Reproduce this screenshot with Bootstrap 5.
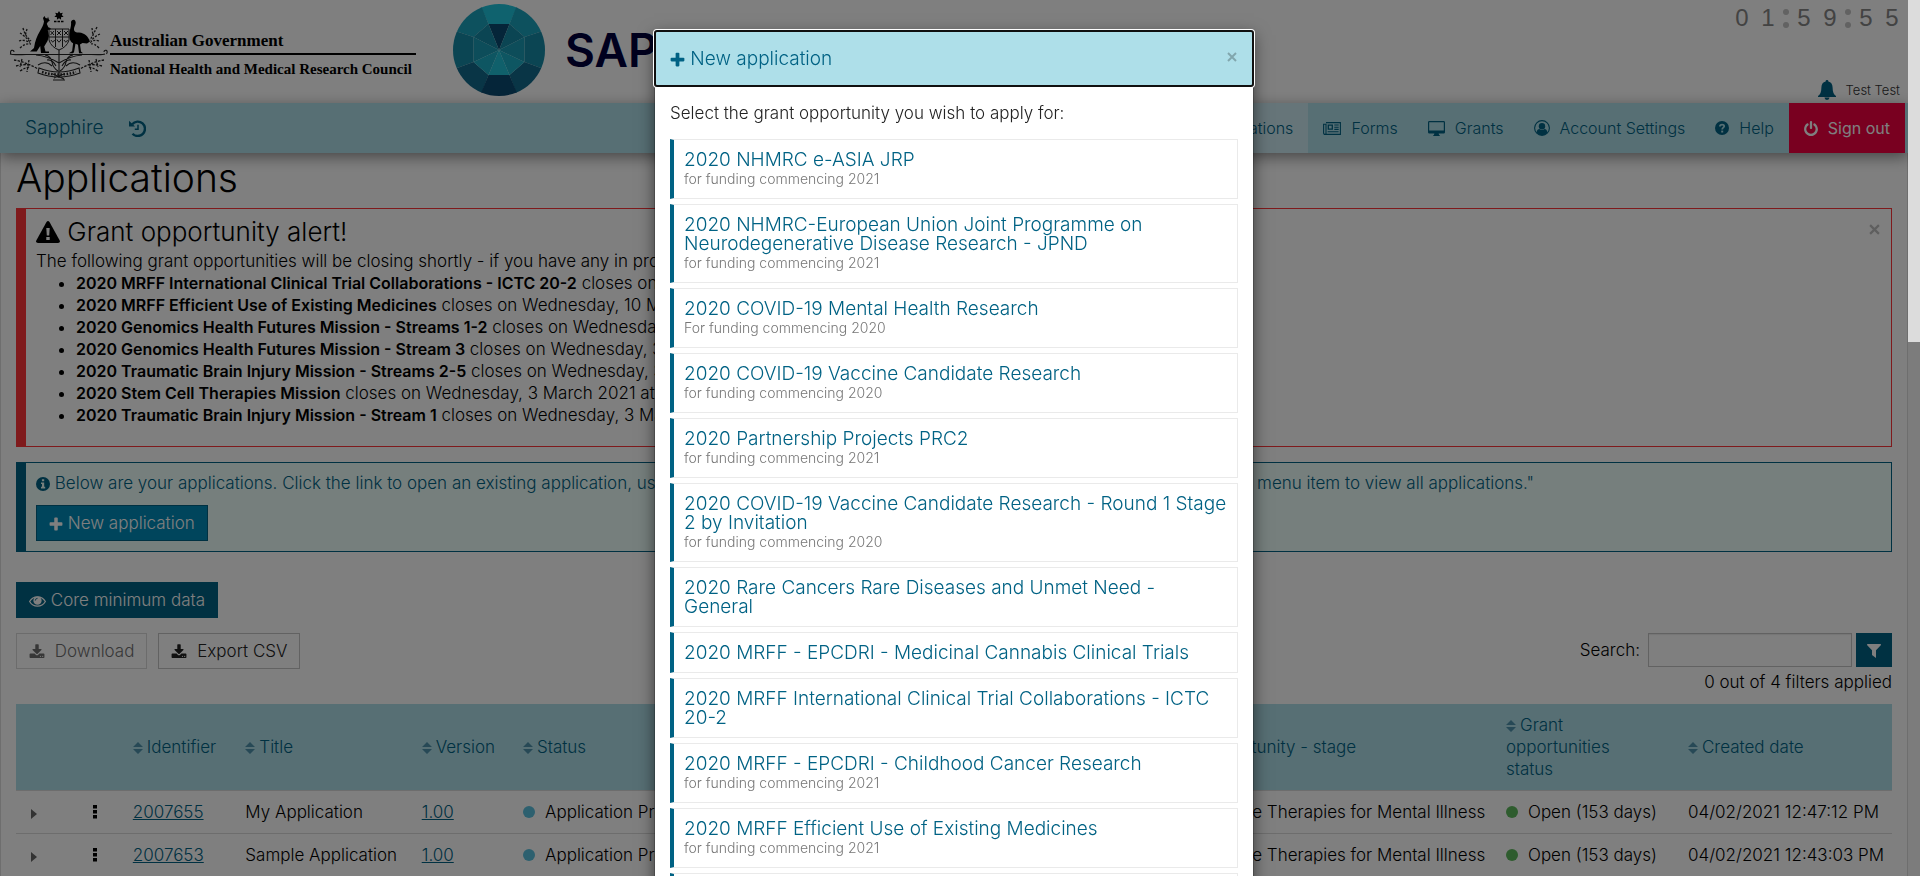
<!DOCTYPE html>
<html lang="en">
<head>
<meta charset="utf-8">
<meta name="viewport" content="width=device-width, initial-scale=1">
<title>Sapphire - Applications</title>
<link href="https://cdn.jsdelivr.net/npm/bootstrap@5.3.0/dist/css/bootstrap.min.css" rel="stylesheet">
<style>
:root { --brand: #006284; --sky: #aedfe8; }
body { font-family: Inter, "Liberation Sans", sans-serif; font-size: 17px; font-weight: 300; line-height: 22px; color: #000; background: #fff; }
a { color: var(--brand); }
.fa-svg { fill: currentColor; flex: none; vertical-align: -2px; }
.page-wrap { margin-right: 12px; }

/* masthead */
.masthead { height: 103px; }
.crest { margin: 10px 0 0 8px; }
.gov-name { font: bold 17px/20px "Liberation Serif", serif; width: 306px; margin: 31px 0 0 2px; }
.gov-name hr { margin: 2px 0 4px; border-top: 2px solid #000; opacity: 1; }
.gov-name .council { font-size: 15px; white-space: nowrap; }
.gem { margin: 4px 0 0 37px; }
.wordmark { font-size: 46px; line-height: 56px; font-weight: 600; color: #00003c; margin: 22px 0 0 20px; }
.countdown { font: 24px/24px "Liberation Sans", sans-serif; color: #868686; padding: 6px 3px 0 0; }
.countdown .digit { width: 26px; text-align: center; }
.countdown .sep { width: 10px; height: 22px; padding: 3px 2px 0; display: flex; flex-direction: column; justify-content: space-between; }
.countdown .sep i { width: 6px; height: 6px; border-radius: 50%; background: #c4c4c4; }
.user-line { font-size: 13px; line-height: 20px; color: #333; gap: 10px; padding: 0 8px 3px 0; }

/* navigation */
.topnav { background: var(--sky); height: 50px; padding: 0 3px 0 25px; position: relative; box-shadow: 0 4px 14px rgba(0,0,0,.45); }
.topnav .navbar-brand { font-size: 19px; color: var(--brand); padding: 0; margin: 0 26px 0 0; }
.topnav .nav-link { font-size: 16px; color: var(--brand); padding: 0 15px; height: 50px; display: flex; align-items: center; gap: 10px; border-radius: 0; }
.topnav .nav-link.active { background: #ccebf3; }
.topnav .sign-out { background: #f20041; color: #fff; font-weight: 400; }

/* page body */
.content-box { border: solid #dcdcdc; border-width: 0 1px; padding: 3px 15px; min-height: 723px; }
.content-box h1 { font-size: 39px; line-height: 44px; font-weight: 300; margin-bottom: 8px; }
.notice { border: 1px solid; border-left-width: 10px; padding: 9px 10px 10px; }
.notice-danger { border-color: #ff3438; padding-bottom: 20px; position: relative; }
.notice-danger h4 { font-size: 26px; line-height: 28px; font-weight: 300; margin-bottom: 4px; }
.notice-danger ul { padding-left: 40px; margin: 0; }
.notice-danger strong { font-size: 16px; font-weight: 600; }
.notice-info { border-color: var(--brand); background: #ecfffa; color: var(--brand); margin-top: 15px; }
.x-btn { border: 0; background: none; padding: 0; color: #000; opacity: .25; line-height: 0; }
.notice .x-btn { position: absolute; right: 11px; top: 15px; }
.btn { --bs-btn-border-radius: 0; --bs-btn-font-size: 17px; --bs-btn-font-weight: 300; --bs-btn-line-height: 22px; --bs-btn-padding-x: 12px; --bs-btn-padding-y: 6px; display: block; }
.btn-new { --bs-btn-bg: #008bb8; --bs-btn-color: #fff; --bs-btn-border-color: var(--brand); margin-top: 11px; }
.btn-brand { --bs-btn-bg: var(--brand); --bs-btn-color: #fff; --bs-btn-border-color: var(--brand); }
.btn-core { margin-top: 30px; }
.btn-plain { --bs-btn-bg: #fff; --bs-btn-color: #222; --bs-btn-border-color: #c4c4c4; --bs-btn-disabled-color: #222; --bs-btn-disabled-border-color: #c4c4c4; }
.btn-plain .fa-svg { margin-right: 5px; }
.toolbar { margin-top: 15px; }
.toolbar-buttons { gap: 11px; }
.search-box { width: 204px; height: 34px; border: 1px solid #c4c4c4; border-radius: 0; box-shadow: inset 0 1px 1px rgba(0,0,0,.08); }
.btn-filter { width: 36px; height: 34px; padding: 0; }

/* applications table */
.app-table { table-layout: fixed; margin: 11px 0 0; font-size: 17px; font-weight: 300; --bs-table-color: #000; --bs-table-bg: transparent; --bs-table-border-color: #dadada; }
.app-table td { white-space: nowrap; }
.app-table > :not(caption) > * > * { padding: 10px 8px; }
.app-table thead th { background: var(--sky); color: var(--brand); font-weight: 300; vertical-align: middle; }
.sort { fill: #4f93ac; margin-right: 4px; }
.dot { display: inline-block; width: 12px; height: 12px; border-radius: 50%; margin-right: 10px; background: #5bc0de; }
.dot-open { background: #5cb85c; }
.fold { border: 0; background: none; padding: 0 0 0 7px; color: #666; line-height: 1; display: block; }
.kebab { border: 0; background: none; padding: 0; color: #000; line-height: 1; display: block; }
.fold, .kebab { height: 20px; }

/* dialog */
.modal-backdrop.show { opacity: .5; }
.modal { right: 12px; width: auto; overflow: hidden; }
.modal-dialog { max-width: 600px; margin: 30px auto; }
.modal-content { border-radius: 0; border: 1px solid rgba(0,0,0,.2); box-shadow: 0 5px 15px rgba(0,0,0,.5); color: #222; }
.modal-header { background: #aedfe9; color: var(--brand); border: 0; border-radius: 2px; outline: 2px solid #101010; outline-offset: -1px; box-shadow: 0 0 0 2px #fff; padding: 17px 16px 16px 15px; }
.modal-title { font-size: 19px; line-height: 22px; font-weight: 300; }
.modal-body { padding: 16px 15px 15px; }
.modal-body p { margin-bottom: 15px; }
.grant { display: block; text-decoration: none; font-size: 19px; line-height: 19px; border: 1px solid #eaeaea; border-left: 4px solid var(--brand); padding: 10px 8px 10px 10px; margin-bottom: 5px; color: var(--brand); }
.grant .sub { display: block; font-size: 14px; color: #777; }

.scroll-rail { position: fixed; z-index: 1070; top: 0; right: 0; bottom: 0; width: 12px; background: #7c7c7c; }
.scroll-rail div { height: 39%; background: #dcdcdc; }
</style>
</head>
<body class="modal-open overflow-hidden">

<svg width="0" height="0" class="position-absolute" aria-hidden="true">
  <symbol id="i-plus" viewBox="128 64 1536 1536"><path d="M1600 736v192q0 40-28 68t-68 28h-416v416q0 40-28 68t-68 28H800q-40 0-68-28t-28-68v-416H288q-40 0-68-28t-28-68V736q0-40 28-68t68-28h416V224q0-40 28-68t68-28h192q40 0 68 28t28 68v416h416q40 0 68 28t28 68z"/></symbol>
  <symbol id="i-download" viewBox="0 0 1792 1600"><path d="M1344 1344q0-26-19-45t-45-19-45 19-19 45 19 45 45 19 45-19 19-45zm256 0q0-26-19-45t-45-19-45 19-19 45 19 45 45 19 45-19 19-45zm128-224v320q0 40-28 68t-68 28H160q-40 0-68-28t-28-68v-320q0-40 28-68t68-28h465l135 136q58 56 136 56t136-56l136-136h464q40 0 68 28t28 68zm-325-569q17 41-14 70l-448 448q-18 19-45 19t-45-19L403 621q-31-29-14-70 17-39 59-39h256V64q0-26 19-45t45-19h256q26 0 45 19t19 45v448h256q42 0 59 39z"/></symbol>
  <symbol id="i-power" viewBox="128 0 1536 1664"><path d="M1664 896q0 156-61 298t-164 245-245 164-298 61-298-61-245-164-164-245-61-298q0-182 80.500-343T430 283q43-32 95.500-25t83.500 50q32 42 24.500 94.500T583 487q-98 74-151.500 181T378 896q0 104 40.500 198.500T528 1258t163.500 109.500T890 1408t198.500-40.500T1252 1258t109.500-163.500T1402 896q0-121-53.500-228T1197 487q-42-32-49.500-84.500T1171 308q31-43 84-50t95 25q123 93 203.500 254.500T1664 896zM1024 128v640q0 52-38 90t-90 38-90-38-38-90V128q0-52 38-90t90-38 90 38 38 90z"/></symbol>
  <symbol id="i-bell" viewBox="0 0 18 20"><path d="M9 0a1.300 1.300 0 0 1 1.300 1.500C13.200 2.100 14.600 4.500 14.600 7.500c0 4.500 1.200 7 3.400 8.500v1H0v-1c2.200-1.500 3.400-4 3.400-8.500 0-3 1.400-5.400 4.300-6A1.300 1.300 0 0 1 9 0zM6.500 17.500h5a2.500 2.500 0 0 1-5 0z"/></symbol>
  <symbol id="i-history" viewBox="0 0 17 17"><path d="M3.200 4.200A7.200 7.200 0 1 1 3.500 13.700" fill="none" stroke="currentColor" stroke-width="2.400"/><path d="M0 .800 6 6.500H0z"/><path d="M9 4.800v4.400H5.800" fill="none" stroke="currentColor" stroke-width="1.500"/></symbol>
  <symbol id="i-forms" viewBox="0 0 18 13"><path d="M3 .600h14.400v11.800H2A1.400 1.400 0 0 1 .600 11V2.200H3V11a1 1 0 0 1-1 1.300" fill="none" stroke="currentColor" stroke-width="1.100"/><path d="M5.300 3.200h4v4h-4z" fill="none" stroke="currentColor" stroke-width="1.300"/><path d="M11.300 3h4.400M11.300 5.200h4.400M11.300 7.400h4.400M4.600 9.800h11" stroke="currentColor" stroke-width="1.100"/></symbol>
  <symbol id="i-desktop" viewBox="0 0 17 15"><path d="M1.400 0h14.200A1.400 1.400 0 0 1 17 1.400v9.800a1.400 1.400 0 0 1-1.400 1.400h-5l.500 1.400h.600v1H5.300v-1h.600l.500-1.400h-5A1.400 1.400 0 0 1 0 11.200V1.400A1.400 1.400 0 0 1 1.400 0zM1.200 1.200v8.200h14.600V1.200z" fill-rule="evenodd"/></symbol>
  <symbol id="i-user" viewBox="0 0 16 16"><circle cx="8" cy="8" r="7.400" fill="none" stroke="currentColor" stroke-width="1.100"/><circle cx="8" cy="6.300" r="3.200"/><path d="M2.500 12.400c.4-2.300 1.600-3.300 2.900-3.400a4 4 0 0 0 5.200 0c1.300.1 2.500 1.100 2.900 3.400a7 7 0 0 1-11 0z"/></symbol>
  <symbol id="i-help" viewBox="0 0 14 14"><circle cx="7" cy="7" r="7"/><path d="M4.900 5.500C5 2.800 9.300 3 9.200 5.300 9.100 6.700 7.200 6.700 7.200 8.400" fill="none" stroke="var(--sky)" stroke-width="1.800"/><path d="M6.200 9.600h2v1.900h-2z" fill="var(--sky)"/></symbol>
  <symbol id="i-warn" viewBox="0 0 24 22"><path d="M10.500 1Q12-1 13.500 1l10.200 18.500Q24.500 22 22 22H2Q-.5 22 .3 19.500z"/><path d="M10.300 7h3.400l-.5 7.500h-2.400zM10.300 16h3.400v3h-3.400z" fill="#fff"/></symbol>
  <symbol id="i-info" viewBox="0 0 14 14"><circle cx="7" cy="7" r="7"/><path d="M5.900 2.300h2.300v2H5.900zM5 5.500h3.200v4.300H9.200v1.600H5V9.800h1V7H5z" fill="#ecfffa"/></symbol>
  <symbol id="i-eye" viewBox="0 0 16 12"><path d="M.6 6C4 .1 12 .1 15.400 6 12 11.900 4 11.900.6 6z" fill="none" stroke="currentColor" stroke-width="1.200"/><circle cx="8" cy="5.200" r="3.900"/><path d="M5.900 5.200A2.200 2.200 0 0 1 8.100 3" fill="none" stroke="var(--brand)" stroke-width=".8"/></symbol>
  <symbol id="i-filter" viewBox="0 0 14 14"><path d="M.5 0h13q.8.500.3 1.200L9 6.200V14L5 11V6.200L.2 1.200Q-.2.500.5 0z"/></symbol>
  <symbol id="i-x" viewBox="0 0 10 10"><path d="M1 1l8 8M9 1L1 9" stroke="currentColor" stroke-width="2"/></symbol>
  <symbol id="i-sort" viewBox="0 0 10 12"><path d="M5 0l5 5H0zM5 12L0 7h10z"/></symbol>
  <symbol id="i-caret" viewBox="0 0 6 10"><path d="M0 0l6 5-6 5z"/></symbol>
  <symbol id="i-dots" viewBox="0 0 4 14"><path d="M0 0h4v3.500H0zM0 5h4v3.500H0zM0 10h4v3.500H0z"/></symbol>
</svg>

<div class="page-wrap">
  <header class="masthead d-flex align-items-start">
    <svg class="crest flex-shrink-0" width="100" height="74" viewBox="8 10 100 74" role="img" aria-label="Commonwealth coat of arms">
      <path d="M59 11l1.300 2.300 2.500-.6-1 2.300 1.800 1.700-2.600.5.100 2.600-2.100-1.600-2.100 1.600.1-2.600-2.600-.5 1.800-1.700-1-2.300 2.500.6z"/>
      <path d="M54 21.500h10" stroke="#000" stroke-width="1.600" stroke-dasharray="2.500 1"/>
      <path d="M43 18l1.500-2 1 2 2 .5.500-2 .8 2.800 1 1.400-1.800 1-1.200 2 1.500 3.500 2.500 1-.5 1.500-2.500.2 1.200 6-1.500 5-3.300 5.500 1.300 5h3.500v1.500h-8l-.8-7-3.500 5.500H30l4-3.500c1-7 3-12 6-17 2-3.500 3.500-6 4-9.500z"/>
      <path d="M71 22c.8-3 4-3 4.500-.5 1 3-1.800 5-1.500 8.500.5 2 2 2.500 5 2.500 6 .5 9 4 11 9l-3 2-4.500-.5-2.500 1.500 1 7 2 1.700h-4l-1-8.500-2.500-1-1.500 8.500-1.200 1h-4l3.300-2 1-8c-3.500-2-4.300-6-3.500-11 .5-3.500 1.500-6 1.500-8.500z"/>
      <path d="M49 29h20v11q-2 7-10 10-8-3-10-10zM55.500 29v18M62.500 29v18M49 37h20" fill="none" stroke="#222" stroke-width="1"/>
      <path d="M50.500 31l3.500 4m0-4l-3.500 4M57 31l4 4m0-4l-4 4M64 31l4 4m0-4l-4 4M51 40q2 4 3.500 0M57 39.500q2 5 4 0M64 40q2 4 3.500 0" fill="none" stroke="#222"/>
      <path d="M11 54c-2-4 3-5 3-2M10 54q3 1 16 .5h65q12 .5 14-.5M104 52c0-3 5-2 2.500 2M36 55q12 1 23 8 11-7 23-8M59 50v28M45 55q6 1 7 7t6 9M73 55q-6 1-7 7t-6 9" fill="none" stroke="#222" stroke-width="1.100"/>
      <path d="M14 60q12 2 24 9M16 66q8-2 14-1M20 71q6-4 10-4M22 59l-2 8M29 60l-2 12M104 60q-12 2-24 9M102 66q-8-2-14-1M98 71q-6-4-10-4M96 59l2 8M89 60l2 12" fill="none" stroke="#222" stroke-width="1.300" stroke-dasharray="2.500 1.200"/>
      <path d="M23 28q2 8 8 13M20 33q5 3 10 9M19 41q6-2 11 2M20 48q5-5 11-4M27 29l-2 7M97 27q-4 8-7 13M100 34q-5 2-9 7M99 41q-6-2-9 2M99 48q-5-5-8-4M92 28l1 8" fill="none" stroke="#222" stroke-width="1.300" stroke-dasharray="2.200 1.400"/>
      <path d="M39 68q20 8 40 0l1 5q-21 8-42 0zM54 78l10-4M64 79l-11-5M53 80h12" fill="none" stroke="#222" stroke-width="1.100"/>
      <path d="M42 72q17 5 34 0" fill="none" stroke="#222" stroke-width="2.400" stroke-dasharray="1.600 1.500"/>
      <path d="M38 65q8-5 14 1M80 65q-8-5-14 1M47 60q5-1 9 6M71 60q-5-1-9 6" fill="none" stroke="#222" stroke-width="1.100"/>
    </svg>
    <div class="gov-name flex-shrink-0">
      <div>Australian Government</div>
      <hr>
      <div class="council">National Health and Medical Research Council</div>
    </div>
    <svg class="gem flex-shrink-0" width="92" height="92" viewBox="-46 -46 92 92" role="img" aria-label="Sapphire gem">
      <clipPath id="round"><circle r="46"/></clipPath>
      <g clip-path="url(#round)">
        <path fill="#1fc4dc" d="M-10.500-26L-21-50H21L10.500-26z"/>
        <path fill="#1aa3bd" d="M-10.500-26L-20-50H-50V-21L-25.500-13zM10.500-26L20-50H50V-21L25.500-13z"/>
        <path fill="#168aa6" d="M-25.500-13L-50-21V21L-25.500 12zM25.500-13L50-21V21L25.500 12z"/>
        <path fill="#126b8d" d="M-25.500 12L-50 21V50H-20L-10.500 25zM25.500 12L50 21V50H20L10.500 25z"/>
        <path fill="#0b4b72" d="M-10.500 25L-21 50H21L10.500 25z"/>
        <path fill="#0b4b72" d="M0 0l-10.500-26h21z"/>
        <path fill="#168aa6" d="M0 0l-10.500-26L-25.500-13zM0 0L10.500-26 25.500-13z"/>
        <path fill="#1a9bb4" d="M0 0l-25.500-13V12zM0 0l25.500-13V12z"/>
        <path fill="#1dadc5" d="M0 0l-25.500 12 15 13zM0 0l25.500 12-15 13z"/>
        <path fill="#21c0d6" d="M0 0l-10.500 25h21z"/>
      </g>
    </svg>
    <div class="wordmark">SAPPHIRE</div>
    <div class="ms-auto h-100 d-flex flex-column justify-content-between align-items-end">
      <div class="countdown d-flex" role="timer">
        <span class="digit">0</span><span class="digit">1</span><span class="sep"><i></i><i></i></span><span class="digit">5</span><span class="digit">9</span><span class="sep"><i></i><i></i></span><span class="digit">5</span><span class="digit">5</span>
      </div>
      <div class="user-line d-flex align-items-center">
        <a href="#" aria-label="Notifications"><svg class="fa-svg d-block" width="18" height="20"><use href="#i-bell"/></svg></a>Test Test
      </div>
    </div>
  </header>

  <nav class="topnav d-flex align-items-center">
    <a class="navbar-brand" href="#">Sapphire</a>
    <a href="#" aria-label="History"><svg class="fa-svg d-block" width="17" height="17"><use href="#i-history"/></svg></a>
    <ul class="nav ms-auto flex-nowrap">
      <li class="nav-item"><a class="nav-link active" href="#">Applications</a></li>
      <li class="nav-item"><a class="nav-link" href="#"><svg class="fa-svg" width="18" height="13"><use href="#i-forms"/></svg>Forms</a></li>
      <li class="nav-item"><a class="nav-link" href="#"><svg class="fa-svg" width="17" height="15"><use href="#i-desktop"/></svg>Grants</a></li>
      <li class="nav-item"><a class="nav-link" href="#"><svg class="fa-svg" width="16" height="16"><use href="#i-user"/></svg>Account Settings</a></li>
      <li class="nav-item"><a class="nav-link" href="#"><svg class="fa-svg" width="14" height="14"><use href="#i-help"/></svg>Help</a></li>
      <li class="nav-item"><a class="nav-link sign-out" href="#"><svg class="fa-svg" width="14" height="15"><use href="#i-power"/></svg>Sign out</a></li>
    </ul>
  </nav>

  <main class="content-box">
    <h1>Applications</h1>

    <section class="notice notice-danger">
      <button class="x-btn" type="button" aria-label="Dismiss"><svg width="11" height="11"><use href="#i-x"/></svg></button>
      <h4><svg class="fa-svg" width="24" height="22"><use href="#i-warn"/></svg> Grant opportunity alert!</h4>
      <div>The following grant opportunities will be closing shortly - if you have any in progress, please submit them.</div>
      <ul>
        <li><strong>2020 MRFF International Clinical Trial Collaborations - ICTC 20-2</strong> closes on Wednesday</li>
        <li><strong>2020 MRFF Efficient Use of Existing Medicines</strong> closes on Wednesday, 10 March 2021</li>
        <li><strong>2020 Genomics Health Futures Mission - Streams 1-2</strong> closes on Wednesday</li>
        <li><strong>2020 Genomics Health Futures Mission - Stream 3</strong> closes on Wednesday, 3 March 2021</li>
        <li><strong>2020 Traumatic Brain Injury Mission - Streams 2-5</strong> closes on Wednesday, 3 March 2021</li>
        <li><strong>2020 Stem Cell Therapies Mission</strong> closes on Wednesday, 3 March 2021 at 17:00</li>
        <li><strong>2020 Traumatic Brain Injury Mission - Stream 1</strong> closes on Wednesday, 3 March 2021</li>
      </ul>
    </section>

    <section class="notice notice-info">
      <div class="text-nowrap"><svg class="fa-svg" width="14" height="14"><use href="#i-info"/></svg> Below are your applications. Click the link to open an existing application, use the button below to create any new application or use the "All applications menu item to view all applications."</div>
      <button class="btn btn-new" type="button"><svg class="fa-svg" width="14" height="14"><use href="#i-plus"/></svg> New application</button>
    </section>

    <button class="btn btn-brand btn-core" type="button"><svg class="fa-svg" width="17" height="13"><use href="#i-eye"/></svg> Core minimum data</button>

    <div class="toolbar d-flex justify-content-between align-items-start">
      <div class="toolbar-buttons d-flex">
        <button class="btn btn-plain" type="button" disabled><svg class="fa-svg" width="16" height="15"><use href="#i-download"/></svg> Download</button>
        <button class="btn btn-plain" type="button"><svg class="fa-svg" width="16" height="15"><use href="#i-download"/></svg> Export CSV</button>
      </div>
      <div class="text-end">
        <div class="d-flex align-items-center">
          <label for="q" class="me-2">Search:</label>
          <input id="q" type="text" class="search-box me-1">
          <button class="btn btn-brand btn-filter" type="button" aria-label="Filter"><svg class="fa-svg" width="14" height="14"><use href="#i-filter"/></svg></button>
        </div>
        <div class="pt-1">0 out of 4 filters applied</div>
      </div>
    </div>

    <table class="table app-table">
      <colgroup><col style="width:3.7%"><col style="width:2.1%"><col style="width:6%"><col style="width:9.4%"><col style="width:5.4%"><col style="width:32.6%"><col style="width:19.8%"><col style="width:9.7%"><col></colgroup>
      <thead>
        <tr>
          <th></th><th></th>
          <th class="text-nowrap"><svg class="sort" width="10" height="12"><use href="#i-sort"/></svg>Identifier</th>
          <th><svg class="sort" width="10" height="12"><use href="#i-sort"/></svg>Title</th>
          <th class="text-nowrap"><svg class="sort" width="10" height="12"><use href="#i-sort"/></svg>Version</th>
          <th><svg class="sort" width="10" height="12"><use href="#i-sort"/></svg>Status</th>
          <th class="ps-3"><svg class="sort" width="10" height="12"><use href="#i-sort"/></svg>Grant opportunity - stage</th>
          <th><svg class="sort" width="10" height="12"><use href="#i-sort"/></svg>Grant<br>opportunities<br>status</th>
          <th><svg class="sort" width="10" height="12"><use href="#i-sort"/></svg>Created date</th>
        </tr>
      </thead>
      <tbody>
        <tr>
          <td><button class="fold" type="button" aria-label="Expand"><svg class="fa-svg" width="6" height="10"><use href="#i-caret"/></svg></button></td>
          <td><button class="kebab" type="button" aria-label="Actions"><svg class="fa-svg" width="4" height="14"><use href="#i-dots"/></svg></button></td>
          <td><a href="#">2007655</a></td><td>My Application</td><td><a href="#">1.00</a></td>
          <td><span class="dot"></span>Application Pre-submission</td><td>2020 Innovative Therapies for Mental Illness</td>
          <td><span class="dot dot-open"></span>Open (153 days)</td><td>04/02/2021 12:47:12 PM</td>
        </tr>
        <tr>
          <td><button class="fold" type="button" aria-label="Expand"><svg class="fa-svg" width="6" height="10"><use href="#i-caret"/></svg></button></td>
          <td><button class="kebab" type="button" aria-label="Actions"><svg class="fa-svg" width="4" height="14"><use href="#i-dots"/></svg></button></td>
          <td><a href="#">2007653</a></td><td>Sample Application</td><td><a href="#">1.00</a></td>
          <td><span class="dot"></span>Application Pre-submission</td><td>2020 Innovative Therapies for Mental Illness</td>
          <td><span class="dot dot-open"></span>Open (153 days)</td><td>04/02/2021 12:43:03 PM</td>
        </tr>
      </tbody>
    </table>
  </main>
</div>

<div class="modal-backdrop show"></div>
<div class="modal d-block" tabindex="-1" role="dialog" aria-modal="true" aria-labelledby="dlgTitle">
  <div class="modal-dialog">
    <div class="modal-content">
      <div class="modal-header align-items-start">
        <h2 class="modal-title" id="dlgTitle"><svg class="fa-svg" width="15" height="15"><use href="#i-plus"/></svg> New application</h2>
        <button class="x-btn mt-1" type="button" aria-label="Close"><svg width="10" height="10"><use href="#i-x"/></svg></button>
      </div>
      <div class="modal-body">
        <p>Select the grant opportunity you wish to apply for:</p>
        <a class="grant" href="#">2020 NHMRC e-ASIA JRP<span class="sub">for funding commencing 2021</span></a>
        <a class="grant" href="#">2020 NHMRC-European Union Joint Programme on Neurodegenerative Disease Research - JPND<span class="sub">for funding commencing 2021</span></a>
        <a class="grant" href="#">2020 COVID-19 Mental Health Research<span class="sub">For funding commencing 2020</span></a>
        <a class="grant" href="#">2020 COVID-19 Vaccine Candidate Research<span class="sub">for funding commencing 2020</span></a>
        <a class="grant" href="#">2020 Partnership Projects PRC2<span class="sub">for funding commencing 2021</span></a>
        <a class="grant" href="#">2020 COVID-19 Vaccine Candidate Research - Round 1 Stage<br>2 by Invitation<span class="sub">for funding commencing 2020</span></a>
        <a class="grant" href="#">2020 Rare Cancers Rare Diseases and Unmet Need -<br>General</a>
        <a class="grant" href="#">2020 MRFF - EPCDRI - Medicinal Cannabis Clinical Trials</a>
        <a class="grant" href="#">2020 MRFF International Clinical Trial Collaborations - ICTC <span class="text-nowrap">20-2</span></a>
        <a class="grant" href="#">2020 MRFF - EPCDRI - Childhood Cancer Research<span class="sub">for funding commencing 2021</span></a>
        <a class="grant" href="#">2020 MRFF Efficient Use of Existing Medicines<span class="sub">for funding commencing 2021</span></a>
        <a class="grant" href="#">2020 Genomics Health Futures Mission<span class="sub">for funding commencing 2021</span></a>
      </div>
    </div>
  </div>
</div>
<div class="scroll-rail" aria-hidden="true"><div></div></div>

<script src="https://cdn.jsdelivr.net/npm/bootstrap@5.3.0/dist/js/bootstrap.bundle.min.js"></script>
</body>
</html>
